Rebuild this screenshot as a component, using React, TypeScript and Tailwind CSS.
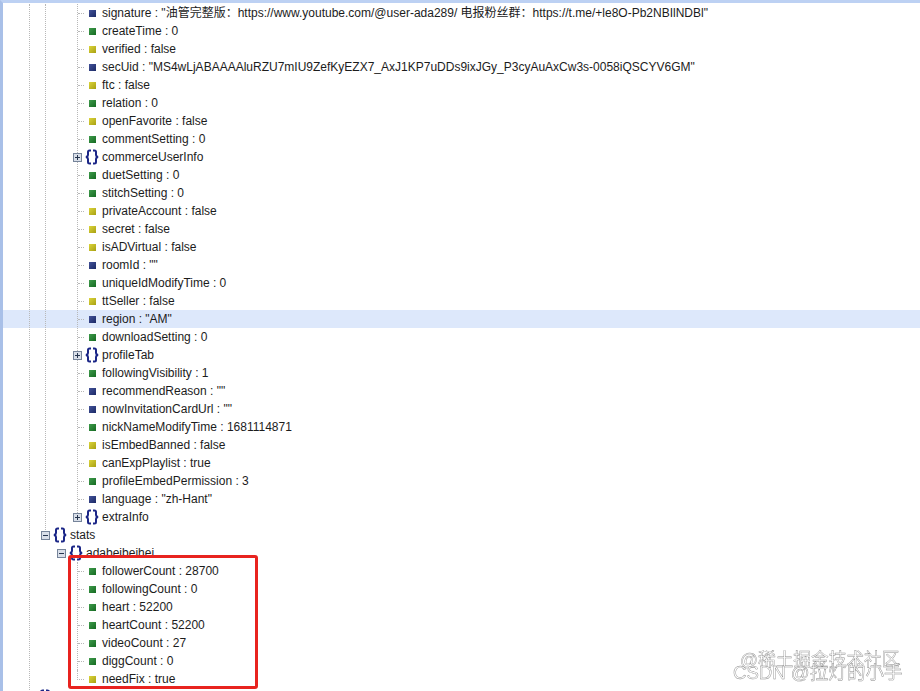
type Kind = "g" | "b" | "y";
type Row = { t: string; k?: Kind; hl?: boolean };

const dot: Record<Kind, string> = {
  g: "from-[#3f9c4c] to-[#146a22]",
  b: "from-[#44539a] to-[#1c2a66]",
  y: "from-[#dcd53a] to-[#a8a010]",
};

const block1: Row[] = [
  { t: 'signature : "油管完整版：https://www.youtube.com/@user-ada289/ 电报粉丝群：https://t.me/+le8O-Pb2NBIlNDBl"', k: "b" },
  { t: "createTime : 0", k: "g" },
  { t: "verified : false", k: "y" },
  { t: 'secUid : "MS4wLjABAAAAluRZU7mIU9ZefKyEZX7_AxJ1KP7uDDs9ixJGy_P3cyAuAxCw3s-0058iQSCYV6GM"', k: "b" },
  { t: "ftc : false", k: "y" },
  { t: "relation : 0", k: "g" },
  { t: "openFavorite : false", k: "y" },
  { t: "commentSetting : 0", k: "g" },
  { t: "commerceUserInfo" },
  { t: "duetSetting : 0", k: "g" },
  { t: "stitchSetting : 0", k: "g" },
  { t: "privateAccount : false", k: "y" },
  { t: "secret : false", k: "y" },
  { t: "isADVirtual : false", k: "y" },
  { t: 'roomId : ""', k: "b" },
  { t: "uniqueIdModifyTime : 0", k: "g" },
  { t: "ttSeller : false", k: "y" },
  { t: 'region : "AM"', k: "b", hl: true },
  { t: "downloadSetting : 0", k: "g" },
  { t: "profileTab" },
  { t: "followingVisibility : 1", k: "g" },
  { t: 'recommendReason : ""', k: "b" },
  { t: 'nowInvitationCardUrl : ""', k: "b" },
  { t: "nickNameModifyTime : 1681114871", k: "g" },
  { t: "isEmbedBanned : false", k: "y" },
  { t: "canExpPlaylist : true", k: "y" },
  { t: "profileEmbedPermission : 3", k: "g" },
  { t: 'language : "zh-Hant"', k: "b" },
];

const stats: Row[] = [
  { t: "followerCount : 28700", k: "g" },
  { t: "followingCount : 0", k: "g" },
  { t: "heart : 52200", k: "g" },
  { t: "heartCount : 52200", k: "g" },
  { t: "videoCount : 27", k: "g" },
  { t: "diggCount : 0", k: "g" },
];

function Braces() {
  return (
    <svg width="14" height="16" viewBox="0 0 14 16" fill="none" stroke="#1b2687" strokeWidth="2" className="shrink-0">
      <path d="M6 1.5H4.5Q3 1.5 3 3V6Q3 7.5 1 8Q3 8.5 3 10V13Q3 14.5 4.5 14.5H6" />
      <path d="M8 1.5H9.5Q11 1.5 11 3V6Q11 7.5 13 8Q11 8.5 11 10V13Q11 14.5 9.5 14.5H8" />
    </svg>
  );
}

function Toggle({ open }: { open?: boolean }) {
  return (
    <svg width="9" height="9" viewBox="0 0 9 9" className="shrink-0">
      <rect x="0.5" y="0.5" width="8" height="8" fill="#d9dfe9" stroke="#76849a" />
      <path d={open ? "M2 4.5H7" : "M2 4.5H7M4.5 2V7"} stroke="#26354f" />
    </svg>
  );
}

function Leaf({ row, last }: { row: Row; last?: boolean }) {
  return (
    <div className="relative flex h-[18px] items-center">
      {row.hl && <div className="absolute -left-[75px] right-0 inset-y-0 -z-10 bg-[#dde8fb]" />}
      {last ? (
        <span className="h-[10px] w-[7px] shrink-0 self-start border-b border-l border-dotted border-[#b8b8b8]" />
      ) : (
        <span className="h-0 w-[6px] shrink-0 border-t border-dotted border-[#b8b8b8]" />
      )}
      <span className={`ml-[5px] h-[7px] w-[7px] shrink-0 bg-linear-to-br ${dot[row.k as Kind]}`} />
      <span className="ml-[6px] whitespace-nowrap">{row.t}</span>
    </div>
  );
}

function Branch({ label, open, className }: { label: string; open?: boolean; className: string }) {
  return (
    <div className={`flex h-[18px] items-center gap-[3px] ${className}`}>
      <Toggle open={open} />
      <Braces />
      <span className="whitespace-nowrap">{label}</span>
    </div>
  );
}

export default function App() {
  return (
    <div
      className="relative isolate h-[691px] w-[920px] overflow-hidden border-l-[3px] border-t-[3px] border-l-[#a9c0e8] border-t-[#bdd1f3] bg-white text-[12px] leading-[18px] text-[#1c1c1c]"
      style={{ fontFamily: '"Liberation Sans","Noto Sans CJK SC",sans-serif' }}
    >
      <div className="ml-[26px] mt-[1px] border-l border-dotted border-[#b8b8b8]">
        <div className="ml-[15px] border-l border-dotted border-[#b8b8b8] pb-[6px]">
          <div className="ml-[31px] border-l border-dotted border-[#b8b8b8] pb-[5px]">
            {block1.map((r) =>
              r.k ? <Leaf key={r.t} row={r} /> : <Branch key={r.t} label={r.t} className="-ml-[5px]" />,
            )}
          </div>
          <Branch label="extraInfo" className="-mt-[5px] pl-[27px]" />
        </div>
        <Branch label="stats" open className="-mt-[6px] pl-[11px]" />
        <Branch label="adabeibeihei" open className="pl-[27px]" />
        <div className="ml-[47px] border-l border-dotted border-[#b8b8b8]">
          {stats.map((r) => (
            <Leaf key={r.t} row={r} />
          ))}
        </div>
        <div className="ml-[47px]">
          <Leaf row={{ t: "needFix : true", k: "y" }} last />
        </div>
        <div className="flex h-[18px] items-center pl-[8px]">
          <Braces />
        </div>
      </div>

      <div className="absolute left-[65px] top-[552px] h-[134px] w-[190px] rounded-[3px] border-[3px] border-[#e8231f]" />
      <div className="absolute left-[737px] top-[647px] whitespace-nowrap text-[17.7px] leading-[20px] text-white blur-[0.3px] [-webkit-text-stroke:0.4px_#8f8f8f]">
        @稀土掘金技术社区
      </div>
      <div className="absolute left-[730px] top-[659px] whitespace-nowrap text-[18.6px] leading-[22px] text-white blur-[0.3px] [-webkit-text-stroke:0.4px_#858585]">
        CSDN @拉灯的小手
      </div>
    </div>
  );
}
